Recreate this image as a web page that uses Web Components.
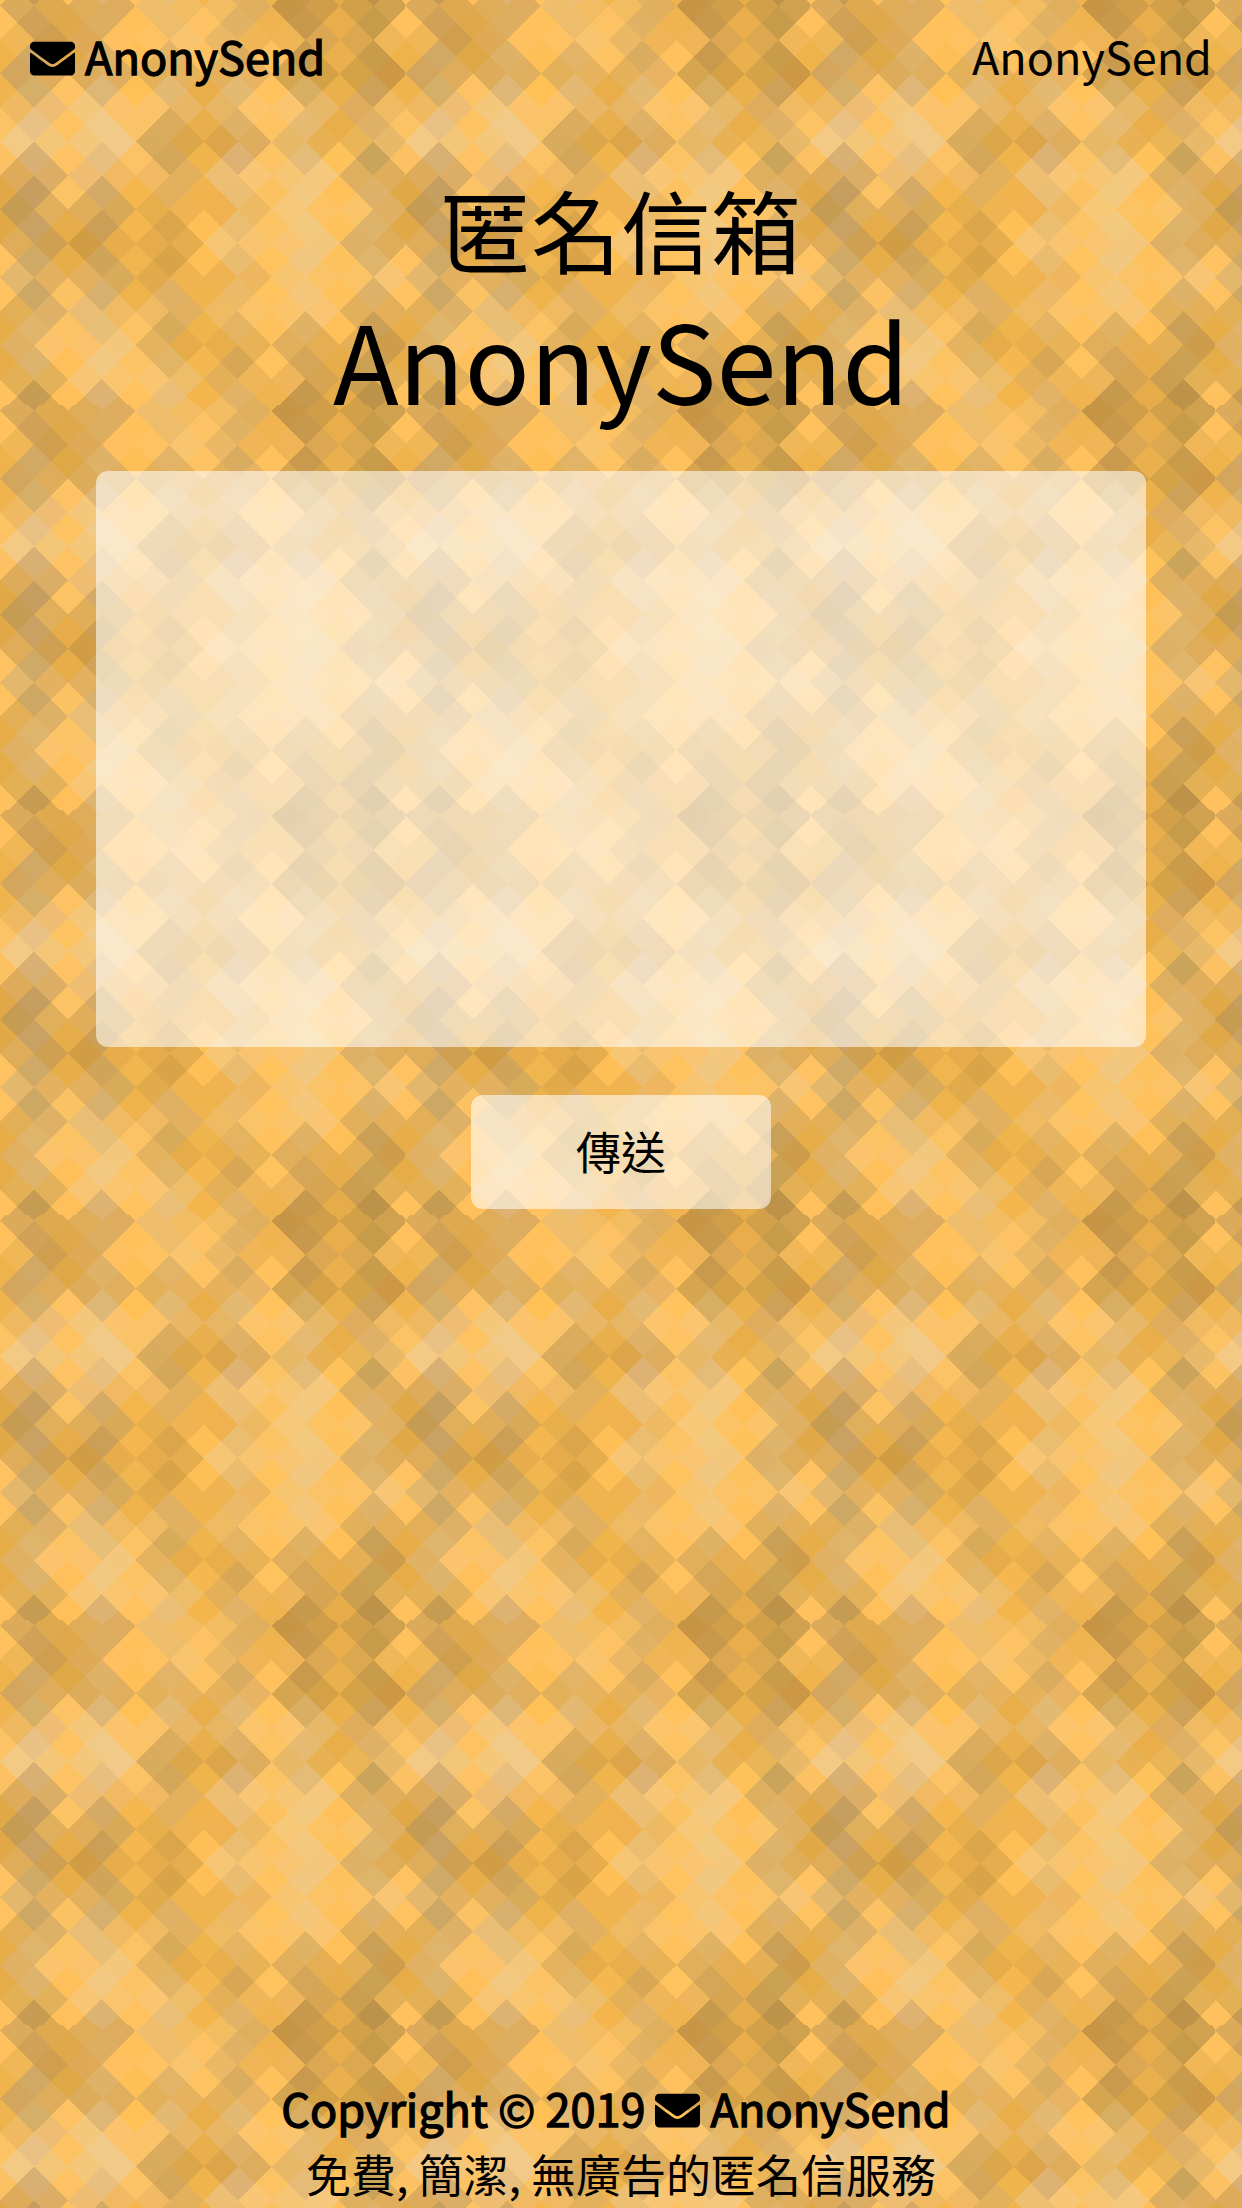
<!DOCTYPE html>
<html lang="zh-Hant">
<head>
<meta charset="utf-8">
<meta name="viewport" content="width=device-width, initial-scale=1">
<title>AnonySend</title>
<style>
  html, body { margin: 0; }
  body {
    font-family: "Noto Sans CJK TC", "Noto Sans", sans-serif;
    font-size: 45px;
    font-weight: 400;
    line-height: 66px;
    color: #000;
  }
</style>
</head>
<body>
<anony-page>
  <anony-header slot="top"></anony-header>
  <anony-form>
    <span slot="name">匿名信箱</span>
    <span slot="brand">AnonySend</span>
    <span slot="action">傳送</span>
  </anony-form>
  <anony-footer slot="bottom">免費, 簡潔, 無廣告的匿名信服務</anony-footer>
</anony-page>

<script>
// Diamond mosaic: 24 rows of 12 colours; odd rows are shifted by half a diamond.
const MOSAIC = [
  'DBAA5B DFA94F DFAC59 DEAC5E EFBE6C F2BC62 F2BC60 E0AF5E C69545 D09D48 D1A049 D0A24F',
  'FEC15D D0A157 DFA94B DDAE60 FFC15C EEBD6B FCC263 E1B164 EFB34F C8994D E9AE4B C69B4A',
  'EFB755 CF9F4F DEAA57 FFC160 FEC262 F8C46D EBB865 EFB557 EFB456 DBA753 DCA84F EFB758',
  'EFB34B D2A865 DFA846 DFB367 FFBF57 E3B468 FDC262 D9AC60 FFC15D C99A4E EAB04D C89C4A',
  'D4A65D DFAC5C DDAC5A DFAF5F E4B15B E7B25D E6B15B E8B362 D6A550 D4A146 D4A247 CC9846',
  'EFB44D D5AE68 FCC264 DEB676 FFC056 E4B971 E9AE4A E4BA72 FFC25C D8AE63 EAB04C CDA158',
  'EFB961 EEBC73 F5C77B FAC36C FAC36A E9B665 E7B665 FCC56C FBC56F E6B868 DFAC5E EFBA62',
  'FCC365 EAC184 FDC262 F2CA87 FBC367 DBAC5D E8AF4C DFB166 FDC262 E6BA71 E9AE4A DFB167',
  'F3C984 F4C778 F4C77A F3C987 D9AB5C DCA64A DCA54A DEAC5D E7B866 E8B254 E9B557 E7B968',
  'FCC163 D8B074 FCC264 E8BF7F FCC366 D3A65A EFB44C DEB272 FBC363 E4BC78 FEC25B CBA45C',
  'DEAB5A DCAD65 EFBD71 F1BA62 F1BA62 E3B05C EEBF72 F8C674 F7C675 F5C87D DEAF5E DFAD5B',
  'E1A848 C59E60 FCC364 D4AA66 F5B64E E3B05D F0B34D EBBE74 FCC261 F3C97F FFC05A DEB269',
  'C69C53 DFAF5B E0AE5A D8A957 E7AE4C EFB351 F0B250 EDB962 F6C878 FCC365 FCC468 DFB062',
  'E1A847 C9A163 E6AC49 CBA056 F4B64F DBA54B FFBF57 EABD70 FCC364 F3C97D FDC25C DEB46A',
  'DFAC5A CFA052 D09D45 E7AC4B E6AC4B E5AD4D F7C675 F8C470 F9C572 F4C77C DFB166 DFAC5A',
  'FEC263 CFAA66 E7AD48 D0A459 EFB54E D9A447 FFBF57 E9BC6F FEC25F F2C880 FDC25D DFB46B',
  'E3B86D E3B15F E2B05E D8AB5B E1AB4B EFB350 EFB352 EEB75F F7C570 FBC367 FBC365 F8C575',
  'FEC261 CDA764 FBC264 D8B06D EFB34C E0B164 EFB44D EBB967 FEC25F F5C77A FFC15B DFB26A',
  'E3AF56 DEB166 E9BE74 F0BA62 F0BA62 E2B061 EFBB62 FBC367 FBC46B F9C572 E2AF5A E3AF58',
  'E6AD49 DFB46B FCC365 E8BF77 FBC364 D8AB5B EFB54D E5B463 FFC15D E0B263 FFC059 CAA056',
  'E0B162 FBC46C FAC36B F3C87D E5B260 E7AC4A E7AE4B E8B356 E1AE5B E5AE52 E4AF55 CE9D4B',
  'E6AC48 DEB46D FFC05B F3C982 FCC365 E1B466 F5B74F D8A755 FEC25E D5A658 E6AD4A CBA154',
  'E3B056 E2B159 F7C574 FAC56F FAC571 EEBD69 E3AF57 EEB658 EEB55A D7A551 CC9F50 E4B056',
  'FEC15D C69C53 FFC05B DEB271 FFC25E EBBF77 F5B54D E2B366 EFB44F C6994C E7AC4A BD9249'
].map(row => row.split(' '));

function mosaicTile() {
  const unit = 16.97, top = 5.8;
  let shapes = '';
  for (let r = -1; r <= 24; r++) {
    const row = (r + 24) % 24;
    const shift = row % 2 ? 0 : 1;
    for (let k = -1; k <= 12; k++) {
      const x = (2 * k + shift) * unit, y = top + r * unit;
      const fill = MOSAIC[row][(k + 12) % 12];
      shapes += `<path fill="#${fill}" d="M${x} ${y - unit}L${x + unit} ${y}L${x} ${y + unit}L${x - unit} ${y}z"/>`;
    }
  }
  const svg = `<svg xmlns="http://www.w3.org/2000/svg" width="405" height="405" viewBox="0 0 405 405" shape-rendering="crispEdges"><rect width="405" height="405" fill="#E9B45C"/>${shapes}</svg>`;
  return `url("data:image/svg+xml,${encodeURIComponent(svg)}")`;
}

function build(host, html) {
  const t = document.createElement('template');
  t.innerHTML = html;
  host.attachShadow({ mode: 'open' }).append(t.content.cloneNode(true));
}

customElements.define('mail-icon', class extends HTMLElement {
  constructor() {
    super();
    build(this, `
      <style>
        :host { display: inline-block; width: 1em; height: 1em; vertical-align: -0.125em; line-height: 1; }
        svg { display: block; width: 100%; height: 100%; fill: currentColor; }
      </style>
      <svg viewBox="0 0 512 512" aria-hidden="true"><path d="M502.3 190.8c3.9-3.1 9.7-.2 9.7 4.7V400c0 26.5-21.5 48-48 48H48c-26.5 0-48-21.5-48-48V195.6c0-5 5.7-7.8 9.7-4.7 22.4 17.4 52.1 39.5 154.1 113.6 21.1 15.4 56.7 47.8 92.2 47.6 35.7.3 72-32.8 92.3-47.6 102-74.1 131.6-96.3 154-113.7zM256 320c23.2.4 56.6-29.2 73.4-41.4 132.7-96.3 142.8-104.7 173.4-128.7 5.8-4.5 9.2-11.5 9.2-18.9v-19c0-26.5-21.5-48-48-48H48c-26.5 0-48 21.5-48 48v19c0 7.4 3.4 14.3 9.2 18.9 30.6 23.9 40.7 32.4 173.4 128.7 16.8 12.2 50.2 41.8 73.4 41.4z"/></svg>`);
  }
});

customElements.define('anony-page', class extends HTMLElement {
  constructor() {
    super();
    build(this, `
      <style>
        :host { display: flex; flex-direction: column; min-height: 100vh; }
        main { flex: 1; }
      </style>
      <slot name="top"></slot>
      <main><slot></slot></main>
      <slot name="bottom"></slot>`);
    this.style.backgroundImage = mosaicTile();
  }
});

customElements.define('anony-header', class extends HTMLElement {
  constructor() {
    super();
    build(this, `
      <style>
        :host { display: block; }
        nav { display: flex; justify-content: space-between; padding: 23px 30px; }
        a { color: inherit; text-decoration: none; }
        .logo { -webkit-text-stroke: 0.03em currentColor; }
      </style>
      <nav>
        <a class="logo" href="#"><mail-icon></mail-icon> AnonySend</a>
        <a href="#">AnonySend</a>
      </nav>`);
  }
});

customElements.define('anony-form', class extends HTMLElement {
  constructor() {
    super();
    build(this, `
      <style>
        :host { display: block; padding: 56px 96px 0; }
        h1 { margin: 0 0 43px; font-weight: 400; text-align: center; }
        .name { display: block; font-size: 90px; line-height: 120px; }
        .brand { display: block; font-size: 108px; line-height: 140px; }
        form { display: flex; flex-direction: column; align-items: center; gap: 48px; }
        textarea, button {
          box-sizing: border-box; margin: 0; border: 0; border-radius: 12px;
          background: rgba(255, 255, 255, .57); color: inherit; font: inherit;
        }
        textarea { display: block; width: 100%; height: 576px; padding: 24px; resize: none; outline: 0; }
        button { width: 300px; height: 114px; padding: 0 0 2px; }
      </style>
      <h1 id="title"><span class="name"><slot name="name"></slot></span><span class="brand"><slot name="brand"></slot></span></h1>
      <form>
        <textarea aria-labelledby="title"></textarea>
        <button type="button"><slot name="action"></slot></button>
      </form>`);
  }
});

customElements.define('anony-footer', class extends HTMLElement {
  constructor() {
    super();
    build(this, `
      <style>
        :host { display: block; }
        footer { padding-bottom: 1px; text-align: center; }
        p { margin: 0; }
        .copy { -webkit-text-stroke: 0.03em currentColor; }
      </style>
      <footer>
        <p class="copy">Copyright © 2019 <mail-icon></mail-icon> AnonySend&nbsp;</p>
        <p><slot></slot></p>
      </footer>`);
  }
});
</script>
</body>
</html>
